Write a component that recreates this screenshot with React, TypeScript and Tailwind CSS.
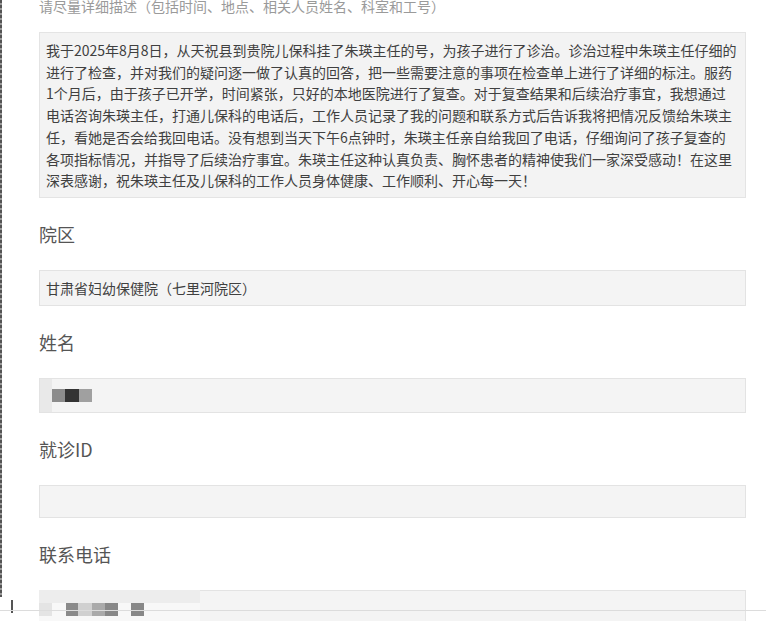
const font = "font-['Microsoft_YaHei','Noto_Sans_CJK_SC',sans-serif]";

const lines = [
  "我于2025年8月8日，从天祝县到贵院儿保科挂了朱瑛主任的号，为孩子进行了诊治。诊治过程中朱瑛主任仔细的",
  "进行了检查，并对我们的疑问逐一做了认真的回答，把一些需要注意的事项在检查单上进行了详细的标注。服药",
  "1个月后，由于孩子已开学，时间紧张，只好的本地医院进行了复查。对于复查结果和后续治疗事宜，我想通过",
  "电话咨询朱瑛主任，打通儿保科的电话后，工作人员记录了我的问题和联系方式后告诉我将把情况反馈给朱瑛主",
  "任，看她是否会给我回电话。没有想到当天下午6点钟时，朱瑛主任亲自给我回了电话，仔细询问了孩子复查的",
  "各项指标情况，并指导了后续治疗事宜。朱瑛主任这种认真负责、胸怀患者的精神使我们一家深受感动！在这里",
  "深表感谢，祝朱瑛主任及儿保科的工作人员身体健康、工作顺利、开心每一天！",
];

const Label = ({ text }: { text: string }) => (
  <div className="pt-[24px] pb-[24px] leading-[24px] text-[18px] text-[#555]">{text}</div>
);

export default function App() {
  return (
    <div className={`w-[766px] h-[621px] overflow-hidden bg-white relative flex ${font}`}>
      {/* window edge */}
      <div className="w-[39px] shrink-0 flex flex-col">
        <div className="w-[2px] h-[597px] bg-[repeating-linear-gradient(to_bottom,#555_0_3px,#9a9a9a_3px_5px)]" />
        <div className="ml-[11px] mt-[3px] w-[2px] h-[13px] bg-[#555]" />
      </div>

      <div className="w-[707px] shrink-0">
        {/* hint */}
        <div className="h-[32px] overflow-hidden">
          <div className="-mt-[4px] leading-[20px] text-[14px] text-[#9a9a9a] whitespace-nowrap">
            请尽量详细描述（包括时间、地点、相关人员姓名、科室和工号）
          </div>
        </div>

        {/* description */}
        <div className="h-[166px] bg-[#f3f3f3] border border-[#e4e4e4] pl-[6px] pt-[7px] text-[14px] leading-[21.7px] text-[#404040]">
          {lines.map((l, i) => (
            <div key={i} className="whitespace-nowrap">{l}</div>
          ))}
        </div>

        <Label text="院区" />
        <div className="h-[36px] bg-[#f4f4f4] border border-[#e3e3e3] pl-[6px] flex items-center text-[14px] text-[#404040]">
          甘肃省妇幼保健院（七里河院区）
        </div>

        <Label text="姓名" />
        <div className="h-[35px] bg-[#f4f4f4] border border-[#e3e3e3] flex items-center">
          <div className="w-[12px] h-full bg-[#e9e9e9]" />
          <div className="w-[13px] h-[13px] bg-[#8c8c8c]" />
          <div className="w-[14px] h-[13px] bg-[#333]" />
          <div className="w-[13px] h-[13px] bg-[#a0a0a0]" />
        </div>

        <Label text="就诊ID" />
        <div className="h-[33px] bg-[#f4f4f4] border border-[#e3e3e3]" />

        <Label text="联系电话" />
        <div className="h-[40px] bg-[#f4f4f4] border border-[#e3e3e3]">
          <div className="-mt-px -ml-px w-[161px] h-[33px] bg-[#f8f8f8] flex flex-col">
            <div className="h-[13px] bg-[#ededed]" />
            <div className="flex h-[13px]">
              <div className="w-[13px] bg-[#e4e4e4]" />
              <div className="w-[14px]" />
              <div className="w-[12px] bg-[#8a8a8a]" />
              <div className="w-[14px] bg-[#d0d0d0]" />
              <div className="w-[13px] bg-[#aaa]" />
              <div className="w-[13px] bg-[#888]" />
              <div className="w-[13px]" />
              <div className="w-[13px] bg-[#888]" />
            </div>
          </div>
        </div>
      </div>

      {/* screenshot frame line */}
      <div className="absolute left-0 right-0 top-[610px] h-px bg-[#dcdcdc]" />
    </div>
  );
}
